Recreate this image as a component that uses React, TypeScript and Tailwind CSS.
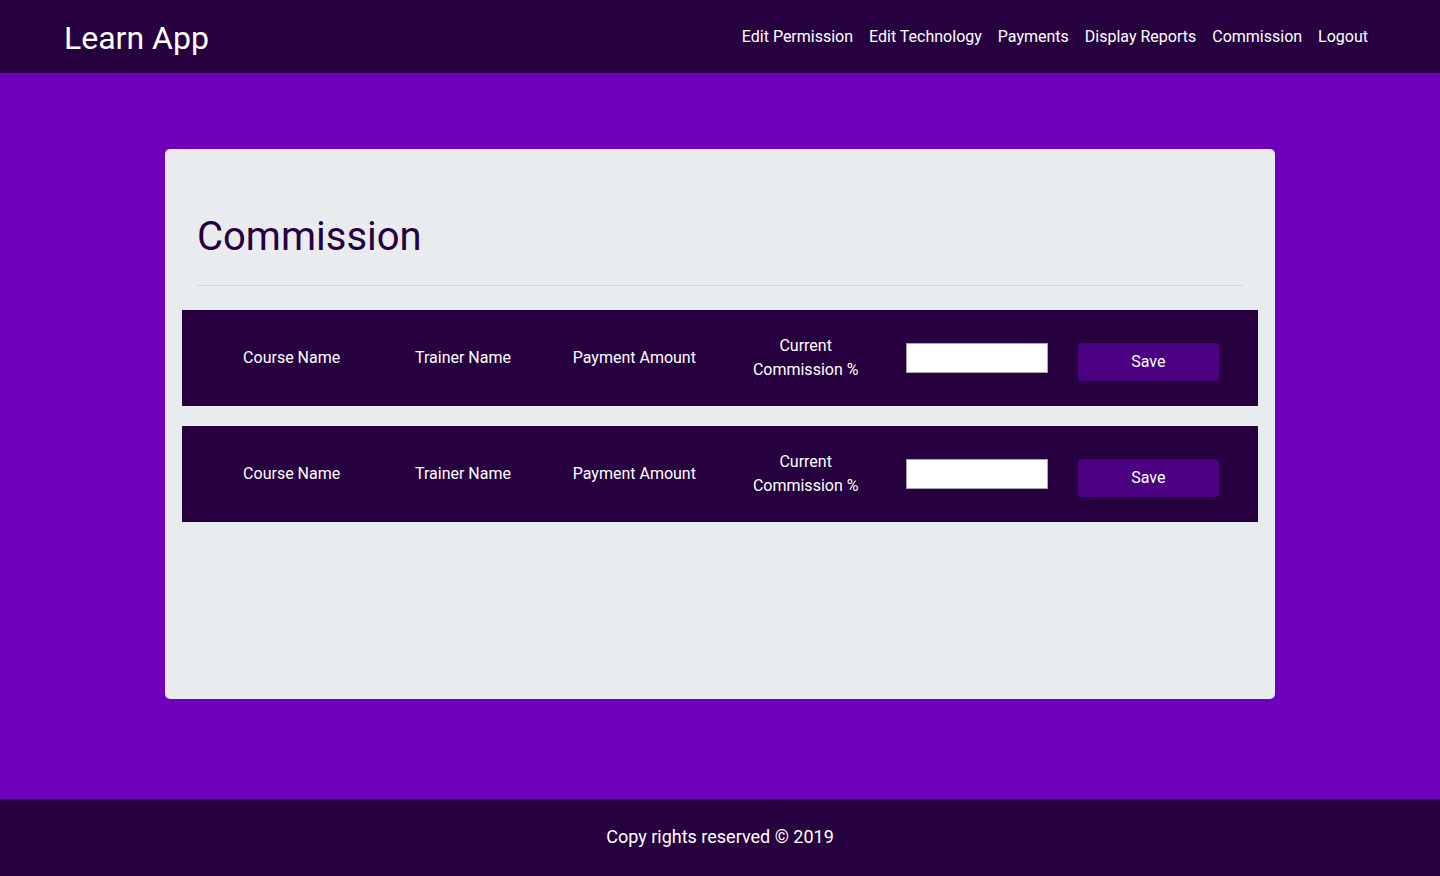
import React from "react";

const navItems = ["Edit Permission", "Edit Technology", "Payments", "Display Reports", "Commission", "Logout"];

function Row() {
  return (
    <div className="bg-[#27003f] h-[96px] px-[24px] grid grid-cols-6 items-center text-white text-[16px] leading-[24px]">
      <div className="text-center">Course Name</div>
      <div className="text-center">Trainer Name</div>
      <div className="text-center">Payment Amount</div>
      <div className="text-center">
        Current
        <br />
        Commission %
      </div>
      <div className="px-[15px] self-start mt-[33px]">
        <input type="text" className="block w-full h-[30px] bg-white border border-[#a9a9a9] outline-none text-black px-1" />
      </div>
      <div className="px-[15px] self-start mt-[33px]">
        <button className="block w-full h-[38px] bg-[#4b0082] rounded-[4px] text-white text-[16px]">Save</button>
      </div>
    </div>
  );
}

export default function App() {
  return (
    <div className="min-h-[876px] flex flex-col bg-[#6f00be]" style={{ fontFamily: "Roboto, 'Liberation Sans', sans-serif" }}>
      <header className="h-[73px] bg-[#27003f] flex items-center justify-between pl-[64px] pr-[72px]">
        <div className="text-white text-[32px] leading-none pt-[3px]">Learn App</div>
        <nav className="flex items-center gap-[16px] text-white text-[16px]">
          {navItems.map((n) => (
            <a key={n} href="#" className="text-white">
              {n}
            </a>
          ))}
        </nav>
      </header>
      <main className="flex-1 flex justify-center pt-[76px] pb-[100px]">
        <div className="w-[1110px] h-[550px] bg-[#e9ecef] rounded-[5px] px-[17px]">
          <div className="px-[15px] pt-[63px]">
            <h1 className="text-[40px] leading-[50px] text-[#27003f] font-normal">Commission</h1>
            <div className="mt-[23px] border-t border-[#d2d4d7]" />
          </div>
          <div className="mt-[24px] flex flex-col gap-[20px]">
            <Row />
            <Row />
          </div>
        </div>
      </main>
      <footer className="h-[77px] bg-[#27003f] flex items-center justify-center text-white text-[18px] pb-[2px]">
        Copy rights reserved © 2019
      </footer>
    </div>
  );
}
